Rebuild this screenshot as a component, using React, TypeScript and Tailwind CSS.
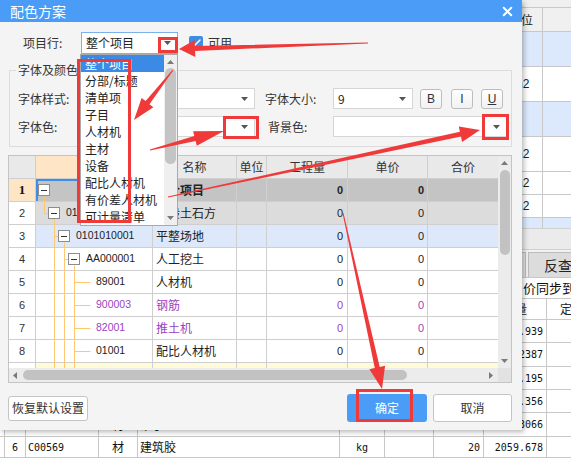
import { X, Check } from "lucide-react"

const RED = "#f03a3a"

type Seg = [number, number, number, number]

type RowData = {
  n: string
  level: number
  leaf?: boolean
  code: string
  name: string
  qty: string
  price: string
  bg: string
  bold?: boolean
  purple?: boolean
  segs: Seg[]
}

const leafSegs: Seg[] = [
  [18, 0, 18, 23],
  [28, 0, 28, 23],
  [38, 0, 38, 23],
  [38, 11, 54, 11],
]

const rows: RowData[] = [
  { n: "1", level: 0, code: "", name: "整个项目", qty: "0", price: "0", bg: "bg-[#c4c4c4]", bold: true, segs: [[8, 17, 8, 23]] },
  { n: "2", level: 1, code: "0101", name: "一般土石方", qty: "0", price: "0", bg: "bg-[#dcdcdc]", segs: [[8, 0, 8, 11], [8, 11, 12, 11], [18, 17, 18, 23]] },
  { n: "3", level: 2, code: "0101010001", name: "平整场地", qty: "0", price: "0", bg: "bg-[#dde9fb]", segs: [[18, 0, 18, 23], [18, 11, 22, 11], [28, 17, 28, 23]] },
  { n: "4", level: 3, code: "AA000001", name: "人工挖土", qty: "0", price: "0", bg: "bg-white", segs: [[18, 0, 18, 23], [28, 0, 28, 23], [28, 11, 32, 11], [38, 17, 38, 23]] },
  { n: "5", level: 4, leaf: true, code: "89001", name: "人材机", qty: "0", price: "0", bg: "bg-white", segs: leafSegs },
  { n: "6", level: 4, leaf: true, code: "900003", name: "钢筋", qty: "0", price: "0", bg: "bg-white", purple: true, segs: leafSegs },
  { n: "7", level: 4, leaf: true, code: "82001", name: "推土机", qty: "0", price: "0", bg: "bg-white", purple: true, segs: leafSegs },
  { n: "8", level: 4, leaf: true, code: "01001", name: "配比人材机", qty: "0", price: "0", bg: "bg-white", segs: leafSegs },
]

const levelPad = ["pl-[2px]", "pl-[12px]", "pl-[22px]", "pl-[32px]"]

const menuItems = ["整个项目", "分部/标题", "清单项", "子目", "人材机", "主材", "设备", "配比人材机", "有价差人材机", "可计量清单"]

function Caret({ dir = "down", color = "#555" }: { dir?: "down" | "up" | "left" | "right"; color?: string }) {
  const d = {
    down: "M0 0h7L3.5 4z",
    up: "M0 4h7L3.5 0z",
    left: "M4 0v7L0 3.5z",
    right: "M0 0v7L4 3.5z",
  }[dir]
  const vertical = dir === "down" || dir === "up"
  return (
    <svg width={vertical ? 7 : 4} height={vertical ? 4 : 7} viewBox={vertical ? "0 0 7 4" : "0 0 4 7"} className="shrink-0">
      <path d={d} fill={color} />
    </svg>
  )
}

function Combo({ className, text, active }: { className: string; text?: string; active?: boolean }) {
  return (
    <div
      className={`flex h-[21px] shrink-0 items-center justify-between border bg-white pl-[4px] pr-[6px] ${
        active ? "border-[#7db1ea]" : "border-[#d6d6d6]"
      } ${className}`}
    >
      <span className="text-[12px] leading-none text-[#222]">{text}</span>
      <Caret />
    </div>
  )
}

function StyleBtn({ children, className = "" }: { children: React.ReactNode; className?: string }) {
  return (
    <div
      className={`flex h-[20px] w-[22px] shrink-0 items-center justify-center rounded-[3px] border border-[#bdbdbd] bg-gradient-to-b from-white to-[#f1f1f1] font-['Liberation_Sans',sans-serif] text-[12px] text-[#333] ${className}`}
    >
      {children}
    </div>
  )
}

function arrow(x1: number, y1: number, x2: number, y2: number, headLen: number, headW: number, w1: number, w2: number) {
  const dx = x2 - x1
  const dy = y2 - y1
  const L = Math.hypot(dx, dy)
  const ux = dx / L
  const uy = dy / L
  const px = -uy
  const py = ux
  const bx = x2 - ux * headLen
  const by = y2 - uy * headLen
  const p = (x: number, y: number) => `${x.toFixed(1)},${y.toFixed(1)}`
  return [
    p(x1 + (px * w1) / 2, y1 + (py * w1) / 2),
    p(bx + (px * w2) / 2, by + (py * w2) / 2),
    p(bx + (px * headW) / 2, by + (py * headW) / 2),
    p(x2, y2),
    p(bx - (px * headW) / 2, by - (py * headW) / 2),
    p(bx - (px * w2) / 2, by - (py * w2) / 2),
    p(x1 - (px * w1) / 2, y1 - (py * w1) / 2),
  ].join(" ")
}

function GridRow({ r }: { r: RowData }) {
  const txt = r.purple ? "text-[#9b3fc1]" : "text-[#222]"
  const first = r.n === "1"
  return (
    <div className={`flex h-[23px] ${r.bg}`}>
      <div
        className={`flex w-[27px] shrink-0 items-center justify-center border-r border-b border-[#cfcfcf] ${
          first
            ? "bg-[#fde5c6] font-['Liberation_Serif',serif] text-[13px] font-bold text-[#111]"
            : "bg-white font-['Liberation_Sans',sans-serif] text-[11px] text-[#333]"
        }`}
      >
        {r.n}
      </div>
      <div
        className={`relative flex w-[117px] shrink-0 items-center border-r border-b border-[#cfcfcf] ${
          r.leaf ? "pl-[60px]" : levelPad[r.level]
        } ${first ? "shadow-[inset_2px_2px_0_#3d8ee8]" : ""}`}
      >
        <svg width="117" height="23" className="absolute left-0 top-0 overflow-visible">
          {r.segs.map((s, i) => (
            <line key={i} x1={s[0] + 0.5} y1={s[1] + 0.5} x2={s[2] + 0.5} y2={s[3] + 0.5} stroke="#ffc86e" strokeWidth="1" />
          ))}
        </svg>
        {!r.leaf && (
          <div className="relative flex h-[12px] w-[12px] shrink-0 items-center justify-center border border-[#8c8c8c] bg-white">
            <div className="h-px w-[6px] bg-[#333]" />
          </div>
        )}
        {r.code && (
          <span className={`relative whitespace-nowrap font-['Liberation_Sans',sans-serif] text-[10.5px] ${r.leaf ? "" : "ml-[6px]"} ${txt}`}>
            {r.code}
          </span>
        )}
      </div>
      <div
        className={`flex w-[84px] shrink-0 items-center overflow-hidden whitespace-nowrap border-r border-b border-[#cfcfcf] pl-[3px] text-[12px] ${txt} ${
          r.bold ? "font-bold" : ""
        }`}
      >
        {r.name}
      </div>
      <div className="w-[30px] shrink-0 border-r border-b border-[#cfcfcf]" />
      <div
        className={`flex w-[81px] shrink-0 items-center justify-end border-r border-b border-[#cfcfcf] pr-[4px] font-['Liberation_Sans',sans-serif] text-[11px] ${txt} ${
          r.bold ? "font-bold" : ""
        }`}
      >
        {r.qty}
      </div>
      <div
        className={`flex w-[80px] shrink-0 items-center justify-end border-r border-b border-[#cfcfcf] pr-[3px] font-['Liberation_Sans',sans-serif] text-[11px] ${txt} ${
          r.bold ? "font-bold" : ""
        }`}
      >
        {r.price}
      </div>
      <div className="w-[70px] shrink-0 border-b border-[#cfcfcf]" />
    </div>
  )
}

const upperRows = [
  { h: "h-[35px]", bg: "bg-[#dce9fc]", t: "" },
  { h: "h-[35px]", bg: "bg-white", t: "m2" },
  { h: "h-[35px]", bg: "bg-[#dce9fc]", t: "" },
  { h: "h-[35px]", bg: "bg-white", t: "m2" },
  { h: "h-[23px]", bg: "bg-white", t: "m2" },
  { h: "h-[23px]", bg: "bg-white", t: "m2" },
  { h: "h-[10px]", bg: "bg-[#dce9fc]", t: "" },
]

const lowerW = ["w-[5px]", "w-[21px]", "w-[73px]", "w-[39px]", "w-[202px]", "w-[45px]", "w-[49px]", "w-[50px]", "w-[63px]"]

const lowerRows = [
  { h: "h-[23px]", c: ["", "1", "C00001", "人", "综合工日", "工日", "", "", "31.939"] },
  { h: "h-[24px]", c: ["", "2", "C00002", "材", "水", "m3", "", "", "0.2387"] },
  { h: "h-[23px]", c: ["", "3", "C00003", "材", "钢筋", "t", "", "", "1.195"] },
  { h: "h-[23px]", c: ["", "4", "C00004", "机", "推土机", "台班", "", "", "2.356"] },
  { h: "h-[24px]", c: ["", "5", "C00005", "材", "砂子", "m3", "", "", "0.3066"] },
  { h: "h-[21px]", c: ["", "6", "C00569", "材", "建筑胶", "kg", "", "20", "2059.678"] },
]

function LowerCell({ i, v }: { i: number; v: string }) {
  const align =
    i === 1 || i === 3 || i === 5 ? "justify-center" : i === 7 || i === 8 ? "justify-end pr-[3px]" : "justify-start pl-[2px]"
  const cjkCell = i === 3 || i === 4
  return (
    <div
      className={`flex ${lowerW[i]} shrink-0 items-center whitespace-nowrap border-r border-[#c8c8c8] ${align} ${
        cjkCell ? "text-[12px]" : "font-['DejaVu_Sans_Mono',monospace] text-[10px]"
      } text-[#111]`}
    >
      {v}
    </div>
  )
}

function Background() {
  return (
    <div className="flex h-[460px] w-[571px] flex-col bg-white">
      <div className="h-[228px] shrink-0">
        <div className="h-[8px] border-b border-[#c8c8c8] bg-[#f0f0f0]" />
        <div className="flex h-[24px] border-b border-[#c8c8c8] bg-[#f0f0f0]">
          <div className="w-[500px] shrink-0" />
          <div className="flex w-[43px] shrink-0 items-center justify-center border-r border-[#c8c8c8] text-[12px] text-[#222]">单位</div>
          <div className="flex-1" />
        </div>
        {upperRows.map((r, i) => (
          <div key={i} className={`flex ${r.h} ${r.bg} ${i < upperRows.length - 1 ? "border-b border-[#c8c8c8]" : ""}`}>
            <div className="w-[500px] shrink-0" />
            <div className="flex w-[43px] shrink-0 items-center justify-center overflow-hidden border-r border-[#c8c8c8] font-['Liberation_Sans',sans-serif] text-[12px] text-[#222]">
              {r.t}
            </div>
            <div className="flex-1" />
          </div>
        ))}
      </div>
      <div className="h-[22px] shrink-0 border-y border-[#d0d0d0] bg-[#ebebeb]" />
      <div className="flex h-[27px] shrink-0 items-end gap-[2px] overflow-hidden bg-[#f2f2f2] pl-[446px]">
        <div className="flex h-[25px] w-[80px] shrink-0 items-center justify-center whitespace-nowrap border border-b-0 border-[#bdbdbd] bg-[#e2e2e2] text-[14px]">
          工料机显示
        </div>
        <div className="flex h-[25px] shrink-0 items-center whitespace-nowrap border border-b-0 border-[#bdbdbd] bg-[#dcdcdc] pl-[15px] pr-[10px] text-[14px] text-[#222]">
          反查图元
        </div>
      </div>
      <div className="flex h-[21px] shrink-0 items-center overflow-hidden whitespace-nowrap border-t border-[#c8c8c8] pl-[523px] text-[13px] text-[#111]">
        价同步到整个项目
      </div>
      <div className="flex h-[22px] shrink-0 overflow-hidden border-y border-[#c8c8c8]">
        {lowerW.map((_, i) => (
          <div
            key={i}
            className={`flex ${lowerW[i]} shrink-0 items-center justify-center whitespace-nowrap border-r border-[#c8c8c8] text-[12px] text-[#222]`}
          >
            {i === 8 ? "数量" : ""}
          </div>
        ))}
        <div className="flex shrink-0 items-center whitespace-nowrap pl-[13px] text-[12px] text-[#222]">定额价</div>
      </div>
      {lowerRows.map((r, ri) => (
        <div key={ri} className={`flex ${r.h} shrink-0 border-b border-[#c8c8c8]`}>
          {r.c.map((v, i) => (
            <LowerCell key={i} i={i} v={v} />
          ))}
          <div className="flex-1" />
        </div>
      ))}
    </div>
  )
}

function Dialog() {
  return (
    <div className="absolute left-0 top-0 flex h-[430px] w-[522px] flex-col bg-[#f4f4f4] shadow-[2px_2px_5px_rgba(0,0,0,0.28)]">
      {/* title */}
      <div className="flex h-[22px] shrink-0 items-center justify-between bg-[#4a9cf6] pl-[10px] pr-[7px]">
        <span className="text-[14px] leading-none text-white">配色方案</span>
        <X size={15} strokeWidth={3.2} color="white" />
      </div>

      {/* 项目行 */}
      <div className="mt-[10px] flex h-[22px] shrink-0 items-center pl-[23px] text-[12px] text-[#333]">
        <span className="w-[58px] shrink-0">项目行:</span>
        <Combo className="h-[22px] w-[97px]" text="整个项目" active />
        <div className="ml-[11px] flex h-[14px] w-[14px] items-center justify-center rounded-[2px] bg-[#3d8de6]">
          <Check size={12} strokeWidth={3} color="white" />
        </div>
        <span className="ml-[5px]">可用</span>
      </div>

      {/* group */}
      <div className="relative ml-[9px] mt-[16px] h-[77px] w-[503px] shrink-0 border border-[#dcdcdc] pl-[8px] pt-[17px] text-[12px] text-[#333]">
        <span className="absolute left-[6px] top-[-9px] bg-[#f4f4f4] px-[2px] leading-[16px]">字体及颜色设置</span>
        <div className="flex h-[21px] items-center">
          <span className="w-[60px] shrink-0">字体样式:</span>
          <Combo className="w-[177px]" />
          <span className="ml-[10px] w-[68px] shrink-0">字体大小:</span>
          <Combo className="w-[80px]" text="9" />
          <StyleBtn className="ml-[7px]">B</StyleBtn>
          <StyleBtn className="ml-[9px]">I</StyleBtn>
          <StyleBtn className="ml-[8px] underline">U</StyleBtn>
        </div>
        <div className="mt-[7px] flex h-[21px] items-center">
          <span className="w-[60px] shrink-0">字体色:</span>
          <Combo className="w-[177px]" />
          <span className="ml-[10px] w-[68px] shrink-0 pl-[3px]">背景色:</span>
          <Combo className="w-[174px]" />
        </div>
      </div>

      {/* grid */}
      <div className="ml-[8px] mt-[8px] flex h-[228px] w-[504px] shrink-0 flex-col border border-[#c4c4c4] bg-white text-[12px]">
        <div className="flex h-[212px]">
          <div className="flex w-[489px] flex-col overflow-hidden">
            <div className="flex h-[23px] shrink-0 bg-[#e9e9e9] text-[#333]">
              <div className="w-[27px] shrink-0 border-r border-b border-[#cfcfcf]" />
              <div className="flex w-[117px] shrink-0 items-center justify-center border-r border-b border-[#cfcfcf] bg-[#fde5c6]">编码</div>
              <div className="flex w-[84px] shrink-0 items-center justify-center border-r border-b border-[#cfcfcf]">名称</div>
              <div className="flex w-[30px] shrink-0 items-center justify-center border-r border-b border-[#cfcfcf]">单位</div>
              <div className="flex w-[81px] shrink-0 items-center justify-center border-r border-b border-[#cfcfcf]">工程量</div>
              <div className="flex w-[80px] shrink-0 items-center justify-center border-r border-b border-[#cfcfcf]">单价</div>
              <div className="flex w-[70px] shrink-0 items-center justify-center border-b border-[#cfcfcf]">合价</div>
            </div>
            {rows.map((r) => (
              <GridRow key={r.n} r={r} />
            ))}
            <div className="flex h-[5px] shrink-0 bg-[#fffbd8]">
              <div className="w-[27px] shrink-0 border-r border-[#cfcfcf] bg-white" />
              <div className="relative w-[117px] shrink-0 border-r border-[#cfcfcf]">
                <svg width="117" height="5" className="absolute left-0 top-0">
                  {[18, 28, 38].map((x) => (
                    <line key={x} x1={x + 0.5} y1="0" x2={x + 0.5} y2="5" stroke="#ffc86e" />
                  ))}
                </svg>
              </div>
              <div className="w-[84px] shrink-0 border-r border-[#cfcfcf]" />
              <div className="w-[30px] shrink-0 border-r border-[#cfcfcf]" />
              <div className="w-[81px] shrink-0 border-r border-[#cfcfcf]" />
              <div className="w-[80px] shrink-0 border-r border-[#cfcfcf]" />
            </div>
          </div>
          <div className="flex w-[13px] flex-col items-center bg-[#ececec]">
            <div className="mt-[5px]">
              <Caret dir="up" color="#7a7a7a" />
            </div>
            <div className="mt-[5px] h-[85px] w-[10px] rounded-full bg-[#c2c2c2]" />
            <div className="flex-1" />
            <div className="mb-[5px]">
              <Caret dir="down" color="#7a7a7a" />
            </div>
          </div>
        </div>
        <div className="flex h-[14px]">
          <div className="flex w-[489px] items-center bg-[#ececec] pl-[4px] pr-[5px]">
            <Caret dir="left" color="#7a7a7a" />
            <div className="ml-[6px] h-[10px] w-[384px] rounded-full bg-[#c2c2c2]" />
            <div className="flex-1" />
            <Caret dir="right" color="#7a7a7a" />
          </div>
          <div className="w-[13px] bg-[#e2e2e2]" />
        </div>
      </div>

      {/* buttons */}
      <div className="mt-[11px] flex h-[28px] shrink-0 items-center text-[12px]">
        <div className="ml-[8px] flex h-[25px] w-[80px] items-center justify-center whitespace-nowrap rounded-[3px] border border-[#c4c4c4] bg-white text-[#333]">
          恢复默认设置
        </div>
        <div className="ml-[259px] flex h-[28px] w-[80px] items-center justify-center rounded-[3px] bg-[#4a9cf6] text-white">确定</div>
        <div className="ml-[6px] flex h-[28px] w-[79px] items-center justify-center rounded-[3px] border border-[#c4c4c4] bg-white text-[#333]">
          取消
        </div>
      </div>
    </div>
  )
}

function Dropdown() {
  return (
    <div className="absolute left-[80px] top-[54px] flex h-[172px] w-[98px] border border-[#a9a9a9] bg-white text-[12px]">
      <div className="flex-1 overflow-hidden">
        {menuItems.map((m, i) => (
          <div
            key={m}
            className={`flex h-[17px] items-center whitespace-nowrap pl-[4px] leading-none ${i === 0 ? "bg-[#3b8ae6] text-white" : "text-[#222]"}`}
          >
            {m}
          </div>
        ))}
      </div>
      <div className="flex w-[13px] shrink-0 flex-col items-center bg-[#efefef]">
        <div className="mt-[5px]">
          <Caret dir="up" color="#7a7a7a" />
        </div>
        <div className="mt-[4px] h-[96px] w-[11px] rounded-full bg-[#c4c4c4]" />
        <div className="flex-1" />
        <div className="mb-[5px]">
          <Caret dir="down" color="#7a7a7a" />
        </div>
      </div>
    </div>
  )
}

function Annotations() {
  return (
    <>
      <div className="absolute left-[77px] top-[59px] h-[164px] w-[54px] border-[3px] border-[#f03a3a]" />
      <div className="absolute left-[158px] top-[37px] h-[16px] w-[20px] border-[3px] border-[#f03a3a]" />
      <div className="absolute left-[223px] top-[116px] h-[23px] w-[36px] border-[3px] border-[#f03a3a]" />
      <div className="absolute left-[482px] top-[114px] h-[26px] w-[27px] border-[3px] border-[#f03a3a]" />
      <div className="absolute left-[356px] top-[389px] h-[33px] w-[57px] border-[3px] border-[#f03a3a]" />
      <svg width="571" height="460" className="pointer-events-none absolute left-0 top-0">
        <polygon points={arrow(368, 43, 179, 49, 16, 17, 1, 5)} fill={RED} />
        <polygon points={arrow(173, 70, 134, 120, 22, 15, 1, 5)} fill={RED} />
        <polygon points={arrow(150, 150, 224, 131, 30, 15, 1, 5)} fill={RED} />
        <polygon points={arrow(168, 197, 480, 130, 20, 16, 1, 5)} fill={RED} />
        <polygon points={arrow(343, 213, 382, 389, 22, 16, 1, 5)} fill={RED} />
      </svg>
    </>
  )
}

export default function App() {
  return (
    <div className="relative h-[460px] w-[571px] overflow-hidden bg-white font-['Noto_Sans_CJK_SC',sans-serif]">
      <Background />
      <Dialog />
      <Dropdown />
      <Annotations />
    </div>
  )
}
